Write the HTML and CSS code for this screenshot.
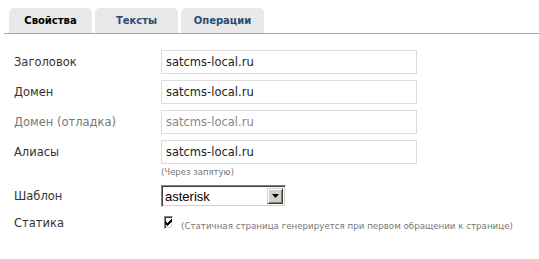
FILE: index.html
```html
<!DOCTYPE html>
<html>
<head>
    <meta charset="UTF-8">
    <title>Свойства сайта</title>
    <link rel="stylesheet" href="styles.css">
</head>

<body>
<div class="tabs">
    <a class="tab tab_active">Свойства</a>
    <a class="tab">Тексты</a>
    <a class="tab">Операции</a>
</div>

<form class="form">
    <label class="label">Заголовок</label>
    <div class="field">
        <input class="input" type="text" value="satcms-local.ru">
    </div>

    <label class="label">Домен</label>
    <div class="field">
        <input class="input" type="text" value="satcms-local.ru">
    </div>

    <label class="label label_muted">Домен (отладка)</label>
    <div class="field">
        <input class="input input_muted" type="text" value="satcms-local.ru">
    </div>

    <label class="label">Алиасы</label>
    <div class="field">
        <input class="input" type="text" value="satcms-local.ru">
        <span class="hint">(Через запятую)</span>
    </div>

    <label class="label label_select">Шаблон</label>
    <div class="field">
        <div class="select">
            <select class="select__box">
                <option>asterisk</option>
            </select>
            <span class="select__btn">
                <svg width="7" height="4" viewBox="0 0 7 4"><path d="M0 0h7L3.5 4z" fill="#000"/></svg>
            </span>
        </div>
    </div>

    <label class="label label_check">Статика</label>
    <div class="field field_check">
        <span class="check">
            <svg width="7" height="7" viewBox="0 0 7 7" shape-rendering="crispEdges">
                <path d="M0 2h1v3h-1zM1 3h1v3h-1zM2 4h1v3h-1zM3 3h1v3h-1zM4 2h1v3h-1zM5 1h1v3h-1zM6 0h1v3h-1z" fill="#000"/>
            </svg>
        </span>
        <span class="hint hint_check">(Статичная страница генерируется при первом обращении к странице)</span>
    </div>
</form>
</body>
</html>
```

FILE: styles.css
```css
* {
    padding: 0;
    margin: 0;
    box-sizing: border-box;
}

body {
    font-family: "DejaVu Sans", Verdana, sans-serif;
    background-color: white;
    color: #333;
}

.tabs {
    display: flex;
    gap: 3px;
    margin-left: 4px;
    padding: 8px 0 0 5px;
    border-bottom: 1px solid #a2a9ae;
}

.tab {
    width: 83px;
    height: 25px;
    display: flex;
    align-items: center;
    justify-content: center;
    font-size: 10px;
    font-weight: bold;
    color: #274e74;
    background-color: #e8e8e8;
    border-radius: 5px 5px 0 0;
}

.tab_active {
    color: #000;
}

.form {
    display: grid;
    grid-template-columns: 147px 256px;
    row-gap: 6px;
    padding: 16px 0 0 14px;
}

.label {
    padding-top: 5px;
    font-size: 11.5px;
    color: #333;
}

.label_muted {
    color: #777;
}

.label_select {
    margin-top: 2px;
    padding-top: 4px;
}

.label_check {
    padding-top: 3px;
}

.field {
    display: flex;
    flex-direction: column;
}

.input {
    width: 256px;
    height: 24px;
    padding: 0 4px;
    border: 1px solid #dcdcdc;
    font-family: "DejaVu Sans", Verdana, sans-serif;
    font-size: 11.5px;
    color: #222;
    background: white;
    outline: none;
}

.input_muted {
    color: #888;
}

.hint {
    font-size: 8.5px;
    color: #777;
    margin-top: 3px;
}

.select {
    display: flex;
    width: 125px;
    height: 22px;
    margin-top: 2px;
    border: 1px solid;
    border-color: #808080 #fff #fff #808080;
    box-shadow: inset 1px 1px 0 #404040, inset -1px -1px 0 #d4d0c8;
    background: white;
    padding: 2px;
}

.select__box {
    flex: 1;
    appearance: none;
    border: none;
    background: transparent;
    font-family: "Liberation Sans", Arial, sans-serif;
    font-size: 13px;
    color: #000;
    padding-left: 1px;
    outline: none;
}

.select__btn {
    width: 16px;
    display: flex;
    align-items: center;
    justify-content: center;
    background: #d4d0c8;
    border: 1px solid;
    border-color: #d4d0c8 #404040 #404040 #d4d0c8;
    box-shadow: inset 1px 1px 0 #fff, inset -1px -1px 0 #808080;
}

.field_check {
    flex-direction: row;
    align-items: flex-start;
    padding: 3px 0 0 3px;
}

.check {
    width: 13px;
    height: 13px;
    display: flex;
    align-items: center;
    justify-content: center;
    border: 1px solid;
    border-color: #808080 #fff #fff #808080;
    box-shadow: inset 1px 1px 0 #404040, inset -1px -1px 0 #d4d0c8;
    background: white;
}

.hint_check {
    white-space: nowrap;
    font-size: 8.7px;
    margin: 5px 0 0 8px;
}
```
